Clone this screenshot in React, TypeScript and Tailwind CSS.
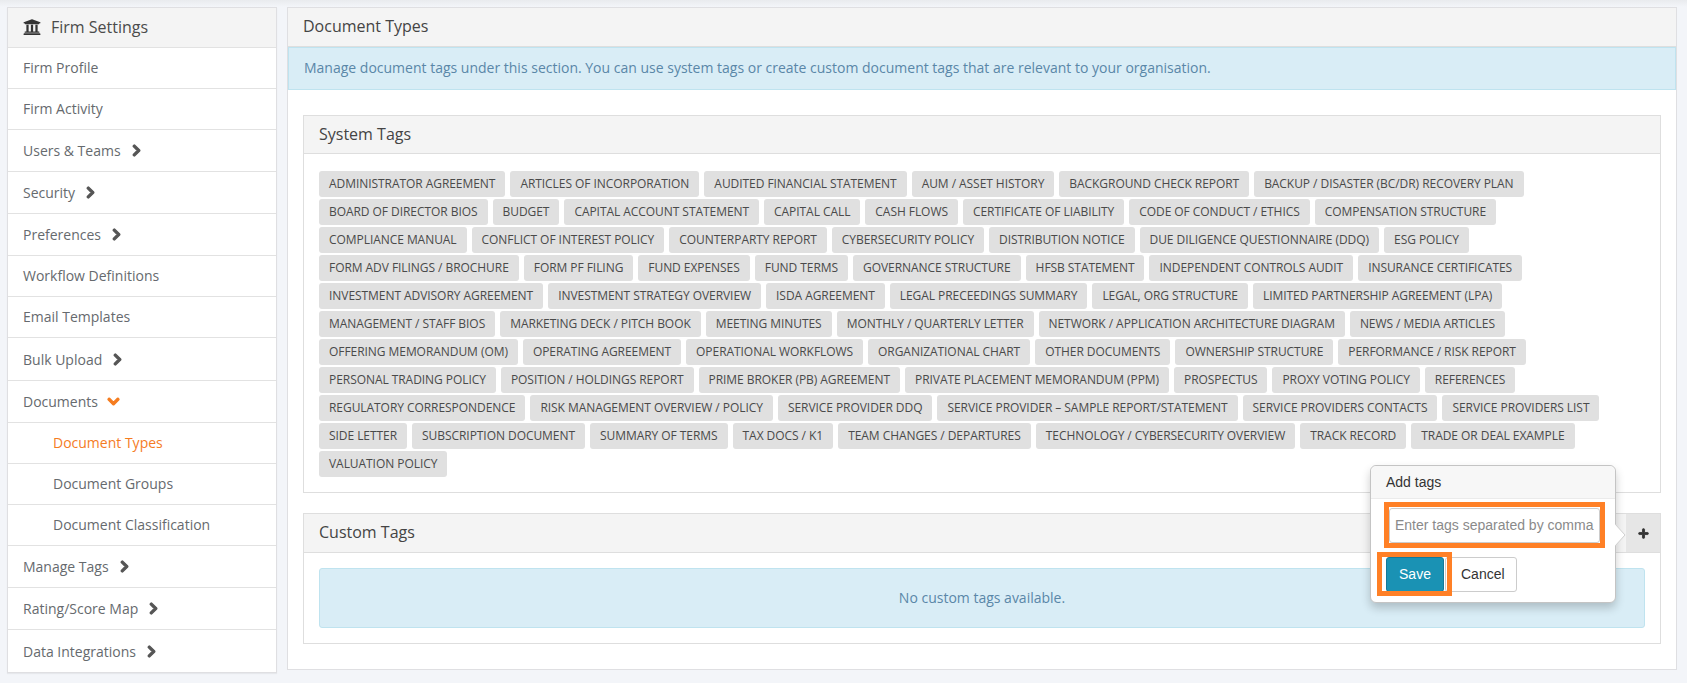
import React from "react";
import { FaChevronRight, FaChevronDown, FaPlus, FaUniversity } from "react-icons/fa";

const tags = [
  "ADMINISTRATOR AGREEMENT","ARTICLES OF INCORPORATION","AUDITED FINANCIAL STATEMENT","AUM / ASSET HISTORY","BACKGROUND CHECK REPORT","BACKUP / DISASTER (BC/DR) RECOVERY PLAN",
  "BOARD OF DIRECTOR BIOS","BUDGET","CAPITAL ACCOUNT STATEMENT","CAPITAL CALL","CASH FLOWS","CERTIFICATE OF LIABILITY","CODE OF CONDUCT / ETHICS","COMPENSATION STRUCTURE",
  "COMPLIANCE MANUAL","CONFLICT OF INTEREST POLICY","COUNTERPARTY REPORT","CYBERSECURITY POLICY","DISTRIBUTION NOTICE","DUE DILIGENCE QUESTIONNAIRE (DDQ)","ESG POLICY",
  "FORM ADV FILINGS / BROCHURE","FORM PF FILING","FUND EXPENSES","FUND TERMS","GOVERNANCE STRUCTURE","HFSB STATEMENT","INDEPENDENT CONTROLS AUDIT","INSURANCE CERTIFICATES",
  "INVESTMENT ADVISORY AGREEMENT","INVESTMENT STRATEGY OVERVIEW","ISDA AGREEMENT","LEGAL PRECEEDINGS SUMMARY","LEGAL, ORG STRUCTURE","LIMITED PARTNERSHIP AGREEMENT (LPA)",
  "MANAGEMENT / STAFF BIOS","MARKETING DECK / PITCH BOOK","MEETING MINUTES","MONTHLY / QUARTERLY LETTER","NETWORK / APPLICATION ARCHITECTURE DIAGRAM","NEWS / MEDIA ARTICLES",
  "OFFERING MEMORANDUM (OM)","OPERATING AGREEMENT","OPERATIONAL WORKFLOWS","ORGANIZATIONAL CHART","OTHER DOCUMENTS","OWNERSHIP STRUCTURE","PERFORMANCE / RISK REPORT",
  "PERSONAL TRADING POLICY","POSITION / HOLDINGS REPORT","PRIME BROKER (PB) AGREEMENT","PRIVATE PLACEMENT MEMORANDUM (PPM)","PROSPECTUS","PROXY VOTING POLICY","REFERENCES",
  "REGULATORY CORRESPONDENCE","RISK MANAGEMENT OVERVIEW / POLICY","SERVICE PROVIDER DDQ","SERVICE PROVIDER – SAMPLE REPORT/STATEMENT","SERVICE PROVIDERS CONTACTS","SERVICE PROVIDERS LIST",
  "SIDE LETTER","SUBSCRIPTION DOCUMENT","SUMMARY OF TERMS","TAX DOCS / K1","TEAM CHANGES / DEPARTURES","TECHNOLOGY / CYBERSECURITY OVERVIEW","TRACK RECORD","TRADE OR DEAL EXAMPLE",
  "VALUATION POLICY",
];

type Item = { label: string; chevron?: "right" | "down"; sub?: boolean; active?: boolean; tall?: boolean };
const items: Item[] = [
  { label: "Firm Profile" },
  { label: "Firm Activity" },
  { label: "Users & Teams", chevron: "right" },
  { label: "Security", chevron: "right" },
  { label: "Preferences", chevron: "right" },
  { label: "Workflow Definitions" },
  { label: "Email Templates" },
  { label: "Bulk Upload", chevron: "right", tall: true },
  { label: "Documents", chevron: "down" },
  { label: "Document Types", sub: true, active: true },
  { label: "Document Groups", sub: true },
  { label: "Document Classification", sub: true },
  { label: "Manage Tags", chevron: "right" },
  { label: "Rating/Score Map", chevron: "right" },
  { label: "Data Integrations", chevron: "right" },
];

function Row({ item }: { item: Item }) {
  return (
    <div
      className={
        "flex items-center border-b border-[#e2e2e2] last:border-b-0 text-[14px] " +
        (item.tall ? "h-[43px] " : item.chevron ? "h-[42px] " : "h-[41px] pb-[2px] ") +
        (item.sub ? "pl-[45px] " : "pl-[15px] ") +
        (item.active ? "text-[#f57c1f]" : "text-[#666a6e]")
      }
    >
      <span>{item.label}</span>
      {item.chevron === "right" && <FaChevronRight stroke="currentColor" strokeWidth={50} className="ml-[9px] text-[#555555] text-[13px]" />}
      {item.chevron === "down" && <FaChevronDown stroke="currentColor" strokeWidth={50} className="ml-[9px] text-[#f57c1f] text-[13px]" />}
    </div>
  );
}

export default function App() {
  return (
    <div className="w-[1687px] h-[692px] overflow-hidden bg-white font-['Open_Sans',sans-serif]">
      <div className="h-[683px] bg-[#f3f5f9]">
        <div className="h-[7px] bg-gradient-to-b from-[#e9ebee] to-[#f3f5f9]" />
        <div className="flex items-start gap-[10px] pl-[7px]">
          <aside className="w-[270px] shrink-0 border border-[#dfdfe2] bg-white shadow-[0_1px_1px_rgba(0,0,0,0.05)]">
            <div className="flex h-[40px] items-center border-b border-[#e2e2e2] bg-[#f4f4f4] pb-[2px] pl-[15px] text-[16px] text-[#4b4b4b]">
              <FaUniversity className="mr-[10px] text-[18px] text-[#333333]" />
              Firm Settings
            </div>
            {items.map((it) => (
              <Row key={it.label} item={it} />
            ))}
          </aside>

          <main className="relative h-[663px] w-[1390px] shrink-0 border border-[#dfdfe2] bg-white">
            <div className="flex h-[39px] items-center border-b border-[#dedede] bg-[#f4f4f4] pb-[2px] pl-[15px] text-[16px] text-[#444444]">
              Document Types
            </div>
            <div className="flex h-[43px] items-center border border-[#bfe3ef] bg-[#d9edf6] pb-[3px] pl-[15px] text-[14px] text-[#5a87a8]">
              Manage document tags under this section. You can use system tags or create custom document tags that are relevant to your organisation.
            </div>

            <div className="mx-[15px] mt-[25px] border border-[#dedede]">
              <div className="flex h-[38px] items-center border-b border-[#dedede] bg-[#f4f4f4] pb-[2px] pl-[15px] text-[16px] text-[#444444]">
                System Tags
              </div>
              <div className="flex flex-wrap gap-x-[5px] gap-y-[2px] px-[15px] pt-[17px] pb-[15px]">
                {tags.map((t) => (
                  <span key={t} className="flex h-[26px] items-center rounded-[3px] bg-[#e0e0e0] px-[10px] text-[12px] tracking-[-0.055px] whitespace-nowrap text-[#4a4a4a]">
                    {t}
                  </span>
                ))}
              </div>
            </div>

            <div className="mx-[15px] mt-[20px] h-[131px] border border-[#dedede]">
              <div className="flex h-[39px] items-center justify-between border-b border-[#dedede] bg-[#f4f4f4] pl-[15px] text-[16px] text-[#444444]">
                <span className="pb-[2px]">Custom Tags</span>
                <div className="flex h-full w-[34px] items-center justify-center bg-[#e6e6e6]">
                  <FaPlus stroke="currentColor" strokeWidth={40} className="text-[11px] text-[#333333]" />
                </div>
              </div>
              <div className="mx-[15px] mt-[15px] flex h-[60px] items-center justify-center rounded-[3px] border border-[#bfe3ef] bg-[#d9edf6] pb-[1px] text-[14px] text-[#5a87a8]">
                No custom tags available.
              </div>
            </div>

            {/* popover */}
            <div className="absolute left-[1082px] top-[457px] h-[138px] w-[246px] rounded-[6px] border border-[#c4c4c4] bg-white font-['Liberation_Sans',sans-serif] shadow-[0_5px_10px_rgba(0,0,0,0.2)]">
              <div className="flex h-[33px] items-center rounded-t-[6px] border-b border-[#ebebeb] bg-[#f7f7f7] pl-[15px] text-[14px] text-[#333333]">
                Add tags
              </div>
              <div className="absolute left-[18px] top-[42px] flex h-[35px] w-[211px] items-center overflow-hidden rounded-[3px] border border-[#cccccc] bg-white pl-[5px] text-[14px] whitespace-nowrap text-[#8a8a8a]">
                Enter tags separated by comma
              </div>
              <div className="absolute left-[15px] top-[91px] flex h-[35px] w-[58px] items-center justify-center rounded-[3px] border border-[#14799a] bg-[#1a92b4] text-[14px] text-white">
                Save
              </div>
              <div className="absolute left-[74px] top-[91px] flex h-[35px] w-[72px] items-center rounded-[3px] border border-[#cccccc] bg-white pl-[15px] text-[14px] text-[#333333]">
                Cancel
              </div>
              {/* annotation boxes */}
              <div className="absolute left-[13px] top-[36px] h-[46px] w-[221px] border-[5px] border-[#ff8026]" />
              <div className="absolute left-[6px] top-[86px] h-[44px] w-[75px] border-[5px] border-[#ff8026]" />
              {/* arrow */}
              <svg className="absolute left-[244px] top-[58px]" width="11" height="22" viewBox="0 0 11 22">
                <path d="M0 0 L10 11 L0 22 Z" fill="#ffffff" />
                <path d="M0 0 L10 11 L0 22" fill="none" stroke="#d0d0d0" strokeWidth="1" />
              </svg>
            </div>
          </main>
        </div>
      </div>
    </div>
  );
}
